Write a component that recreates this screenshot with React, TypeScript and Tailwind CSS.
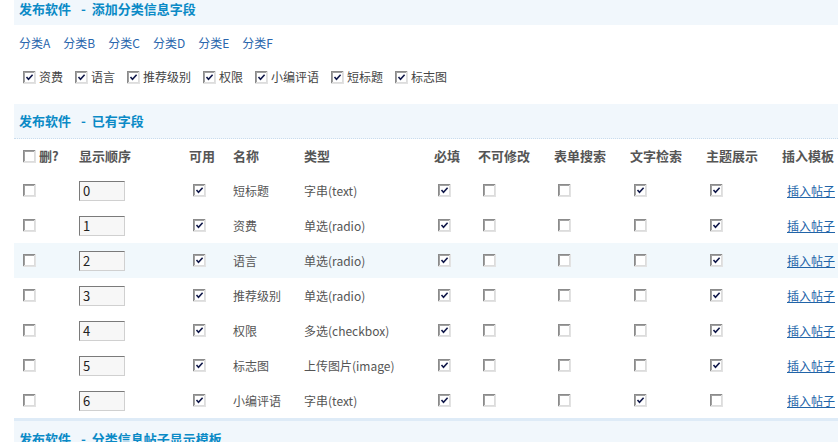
import clsx from "clsx"

const Check: React.FC<{ on?: boolean }> = ({ on }) => (
  <svg width="13" height="13" viewBox="0 0 13 13" className="block">
    <rect x="0" y="0" width="13" height="13" fill="#e2e2e2" />
    <rect x="0" y="0" width="12" height="12" fill="#8b8b8b" />
    <rect x="1" y="1" width="11" height="11" fill="#dcdcdc" />
    <rect x="1" y="1" width="10" height="10" fill="#a0a0a0" />
    <rect x="2" y="2" width="9" height="9" fill="#ffffff" />
    {on && (
      <path
        d="M3.5 6 L5.5 8.2 L9.6 3.8"
        fill="none"
        stroke="#10184a"
        strokeWidth="1.6"
      />
    )}
  </svg>
)

const cols =
  "grid grid-cols-[56px_110px_44px_71px_130px_44px_76px_76px_76px_76px_1fr] items-center"

const rows = [
  { order: 0, name: "短标题", type: "字串(text)", search: true, theme: true },
  { order: 1, name: "资费", type: "单选(radio)", search: false, theme: true },
  { order: 2, name: "语言", type: "单选(radio)", search: false, theme: true },
  { order: 3, name: "推荐级别", type: "单选(radio)", search: false, theme: true },
  { order: 4, name: "权限", type: "多选(checkbox)", search: false, theme: true },
  { order: 5, name: "标志图", type: "上传图片(image)", search: false, theme: true },
  { order: 6, name: "小编评语", type: "字串(text)", search: true, theme: false },
]

const heads = [
  "显示顺序",
  "可用",
  "名称",
  "类型",
  "必填",
  "不可修改",
  "表单搜索",
  "文字检索",
  "主题展示",
  "插入模板",
]

const fields = ["资费", "语言", "推荐级别", "权限", "小编评语", "短标题", "标志图"]

const Title: React.FC<{ main: string; sub: string }> = ({ main, sub }) => (
  <span className="text-[13px] font-bold text-[#0a8ac6] whitespace-nowrap">
    {main}
    <span className="ml-[10px] mr-[6px]">-</span>
    {sub}
  </span>
)

export default function App() {
  return (
    <div className="w-[838px] h-[442px] overflow-hidden bg-white font-['Noto_Sans_CJK_SC','Liberation_Sans',sans-serif] text-[12px] text-[#555]">
      <div className="ml-[14px]">
        {/* add fields */}
        <div className="h-[25px] bg-[#f1f7fc] pl-[5px] leading-[18px]">
          <Title main="发布软件" sub="添加分类信息字段" />
        </div>
        <div className="flex gap-[13px] pl-[5px] pt-[8px] h-[37px] leading-[20px] text-[#2a66ad]">
          {["A", "B", "C", "D", "E", "F"].map((c) => (
            <span key={c}>分类{c}</span>
          ))}
        </div>
        <div className="flex items-center gap-[12px] pl-[9px] h-[30px] mb-[12px] text-[#444]">
          {fields.map((f) => (
            <label key={f} className="flex items-center gap-[3px]">
              <Check on />
              <span>{f}</span>
            </label>
          ))}
        </div>

        {/* existing fields */}
        <div className="h-[35px] bg-[#f1f7fc] pl-[5px] flex items-center border-b border-dotted border-[#c9dced]">
          <Title main="发布软件" sub="已有字段" />
        </div>
        <div className={clsx(cols, "h-[34px] pl-[9px] font-bold text-[13px] text-[#555]")}>
          <div className="flex items-center gap-[3px]">
            <Check />
            <span>删?</span>
          </div>
          {heads.map((h) => (
            <div key={h}>{h}</div>
          ))}
        </div>
        {rows.map((r, i) => (
          <div
            key={r.order}
            className={clsx(cols, "h-[35px] pl-[9px]", i === 2 && "bg-[#f1f8fc]")}
          >
            <div>
              <Check />
            </div>
            <div>
              <div className="w-[46px] h-[20px] bg-[#f7f7f7] border border-t-[#7a7a7a] border-l-[#7a7a7a] border-r-[#d0d0d0] border-b-[#d0d0d0] pl-[3px] leading-[18px] text-[13px] text-[#222]">
                {r.order}
              </div>
            </div>
            <div className="pl-[4px]">
              <Check on />
            </div>
            <div>{r.name}</div>
            <div>{r.type}</div>
            <div className="pl-[4px]">
              <Check on />
            </div>
            <div className="pl-[5px]">
              <Check />
            </div>
            <div className="pl-[4px]">
              <Check />
            </div>
            <div className="pl-[4px]">
              <Check on={r.search} />
            </div>
            <div className="pl-[4px]">
              <Check on={r.theme} />
            </div>
            <div className="pl-[5px]">
              <a href="#" className="underline text-[#2164a8] whitespace-nowrap">
                插入帖子
              </a>
            </div>
          </div>
        ))}

        {/* template */}
        <div className="h-[40px] bg-[#f1f7fc] border-t-[3px] border-[#deebf7] pl-[5px] pt-[9px] leading-[18px]">
          <Title main="发布软件" sub="分类信息帖子显示模板" />
        </div>
      </div>
    </div>
  )
}
